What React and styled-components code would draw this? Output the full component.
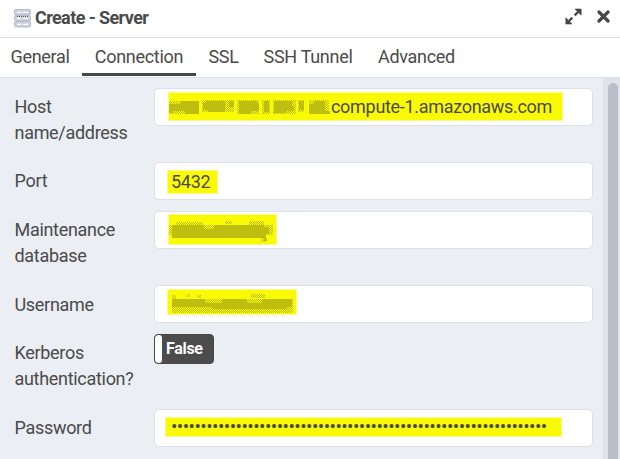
import React from "react";
import styled, { createGlobalStyle } from "styled-components";

const Global = createGlobalStyle`
  * { box-sizing: border-box; }
  body { margin: 0; background: #fff; overflow: hidden; font-family: Roboto, "Liberation Sans", sans-serif; }
`;

const Dialog = styled.div`
  width: 620px;
  height: 459px;
  display: flex;
  flex-direction: column;
  overflow: hidden;
  color: #4a4a4a;
  font-size: 18px;
  letter-spacing: -0.3px;
  line-height: 26px;
  background: #fff;
`;

const Header = styled.header`
  height: 38px;
  flex: none;
  display: flex;
  align-items: center;
  padding: 0 10px 4px 14px;
  border-bottom: 1px solid #dde0e6;
`;

const Title = styled.h1`
  flex: 1;
  margin: 2px 0 0 4px;
  font-size: 18px;
  line-height: 26px;
  font-weight: 700;
  letter-spacing: -0.6px;
`;

const HeaderButton = styled.button`
  display: flex;
  padding: 0;
  margin-left: ${(p) => p.$gap || 0}px;
  border: 0;
  background: none;
  color: #474747;
`;

const Tabs = styled.nav`
  height: 40px;
  flex: none;
  display: flex;
  padding-left: 2px;
  border-bottom: 1px solid #dde0e6;
`;

const Tab = styled.a`
  width: ${(p) => p.$width}px;
  height: 38px;
  padding-top: 6px;
  text-indent: ${(p) => p.$shift || 0}px;
  text-align: center;
  white-space: nowrap;
  border-bottom: 3px solid ${(p) => (p.$active ? "#474747" : "transparent")};
`;

const Body = styled.main`
  flex: 1;
  min-height: 0;
  display: flex;
  background: #ebeef3;
`;

const Form = styled.form`
  flex: 1;
  padding: 10px 10px 0 14.5px;
`;

const Row = styled.div`
  height: ${(p) => p.$height}px;
  display: flex;
  align-items: flex-start;
`;

const Label = styled.label`
  width: 139.5px;
  flex: none;
  padding-top: ${(p) => p.$drop || 6}px;
`;

const Field = styled.div`
  flex: 1;
  height: 38px;
  padding-left: ${(p) => p.$inset}px;
  padding-top: ${(p) => p.$drop}px;
  border: 1px solid #dde0e6;
  border-radius: 5px;
  background: #fff;
  overflow: hidden;
`;

const Highlight = styled.div`
  width: ${(p) => p.$width}px;
  height: ${(p) => p.$height}px;
  display: flex;
  align-items: center;
  padding-left: ${(p) => p.$pad || 0}px;
  background: #fafa05;
  box-shadow: 0 0 0 1px #fafa8c;
  white-space: nowrap;
`;

const Dots = styled.span`
  font-size: 19px;
  letter-spacing: -0.54px;
`;

const Toggle = styled.div`
  width: 60px;
  height: 30px;
  display: flex;
  align-items: center;
  border: 1px solid #474747;
  border-radius: 4px;
  overflow: hidden;
  color: #fff;
  background: #4c4c4c;
  font-size: 16px;
  font-weight: 700;
`;

const Knob = styled.span`
  width: 7px;
  height: 28px;
  margin-right: 4px;
  border-radius: 3px;
  background: #fff;
`;

const Scrollbar = styled.div`
  width: 17px;
  padding: 5px 2px 0 5px;
  background: #dfe2e7;
`;

const Thumb = styled.div`
  height: 100%;
  border-radius: 5px 5px 0 0;
  background: #b9bfca;
`;

const Pixels = styled.svg`
  flex: none;
  margin-top: ${(p) => p.$drop || 0}px;
`;

const ServerIcon = () => (
  <Pixels $drop={3} width="17" height="19" viewBox="0 0 17 19">
    {[0.5, 6.5, 12.5].map((y) => (
      <g key={y}>
        <rect x="0.5" y={y} width="16" height="5.5" rx="1.4" fill="#ccd2de" stroke="#b4bccb" />
        <path d={`M3 ${y + 2.8}h4M9 ${y + 2.8}h5`} stroke="#fff" strokeWidth="1.2" />
      </g>
    ))}
    <path d="M3 7.5h12" stroke="#555" strokeDasharray="1 1" />
  </Pixels>
);

const ExpandIcon = () => (
  <svg width="17" height="17" viewBox="0 0 17 17" fill="currentColor" stroke="currentColor">
    <path d="M10 1h6.2v6.2zM.8 9.8v6.2H7z" strokeWidth="0.6" strokeLinejoin="round" />
    <path d="M14 3L9.7 7.3M7.3 9.7L3 14" strokeWidth="2.4" />
  </svg>
);

const CloseIcon = () => (
  <svg width="13" height="13" viewBox="0 0 13 13" stroke="currentColor" strokeWidth="3.2" strokeLinecap="round">
    <path d="M2 2l9 9M11 2l-9 9" />
  </svg>
);

const Mosaic = ({ width, height, solid, dotted, drop }) => (
  <Pixels $drop={drop} width={width} height={height} viewBox={`0 0 ${width} ${height}`} shapeRendering="crispEdges">
    <defs>
      <pattern id="grain" width="2" height="2" patternUnits="userSpaceOnUse">
        <rect width="1" height="1" fill="#bebe10" />
        <rect x="1" y="1" width="1" height="1" fill="#bebe10" />
      </pattern>
    </defs>
    <path d={dotted} fill="url(#grain)" />
    <path d={solid} fill="#bebe10" />
  </Pixels>
);

const tabs = [
  ["General", 80, -4],
  ["Connection", 114],
  ["SSL", 55],
  ["SSH Tunnel", 114],
  ["Advanced", 103],
];

export default function App() {
  return (
    <>
      <Global />
      <Dialog>
        <Header>
          <ServerIcon />
          <Title>Create - Server</Title>
          <HeaderButton aria-label="Maximize"><ExpandIcon /></HeaderButton>
          <HeaderButton aria-label="Close" $gap={15}><CloseIcon /></HeaderButton>
        </Header>
        <Tabs>
          {tabs.map(([name, width, shift]) => (
            <Tab key={name} $width={width} $shift={shift} $active={name === "Connection"}>{name}</Tab>
          ))}
        </Tabs>
        <Body>
          <Form>
            <Row $height={74}>
              <Label>Host name/address</Label>
              <Field $inset={14} $drop={4}>
                <Highlight $width={393} $height={27}>
                  <Mosaic
                    drop={2}
                    width={162}
                    height={16}
                    solid="M0 4h12v-3h18v13h-14v-3h-12v2h-4zM34 3h3v-2h19v11h-17v-2h-5zM60 1h5v6h-5zM70 1h18v2h2v8h-8v3h-12zM95 1h5v11h-5zM105 1h18v5h2v5h-8v2h-12zM130 1h5v9h-5zM140 4h5v-3h11v10h5v3h-21z"
                    dotted="M0 1h30v13h-30zM33 0h32v12h-32zM68 0h22v14h-22zM93 0h8v14h-8zM104 0h23v14h-23zM129 0h6v12h-6zM140 0h20v14h-20z"
                  />
                  compute-1.amazonaws.com
                </Highlight>
              </Field>
            </Row>
            <Row $height={49}>
              <Label>Port</Label>
              <Field $inset={13} $drop={8}><Highlight $width={49} $height={22} $pad={3}>5432</Highlight></Field>
            </Row>
            <Row $height={74}>
              <Label>Maintenance database</Label>
              <Field $inset={14} $drop={3}>
                <Highlight $width={107} $height={29}>
                  <Mosaic width={107} height={24}
                    solid="M3 7h32v4h10v-4h50v2h5v7h-3v4h-94zM95 20h3v3h-3z"
                    dotted="M7 4h27v3h-27zM56 3h7v3h-7zM80 3h15v4h-15zM0 7h104v10h-104zM92 19h5v5h-5z" />
                </Highlight>
              </Field>
            </Row>
            <Row $height={49}>
              <Label $drop={7}>Username</Label>
              <Field $inset={13} $drop={4}>
                <Highlight $width={128} $height={24}>
                  <Mosaic width={128} height={22}
                    solid="M4 8h33v4h17v-4h25v4h15v-4h30v8h-5v2h-75v-2h-40z"
                    dotted="M4 4h4v4h-4zM19 3h3v3h-3zM29 4h4v3h-4zM83 3h14v4h-14zM4 8h121v14h-121z" />
                </Highlight>
              </Field>
            </Row>
            <Row $height={75}>
              <Label>Kerberos authentication?</Label>
              <Toggle><Knob />False</Toggle>
            </Row>
            <Row $height={49}>
              <Label>Password</Label>
              <Field $inset={11} $drop={8}>
                <Highlight $width={395} $height={18} $pad={5}><Dots>{"•".repeat(64)}</Dots></Highlight>
              </Field>
            </Row>
          </Form>
          <Scrollbar><Thumb /></Scrollbar>
        </Body>
      </Dialog>
    </>
  );
}
